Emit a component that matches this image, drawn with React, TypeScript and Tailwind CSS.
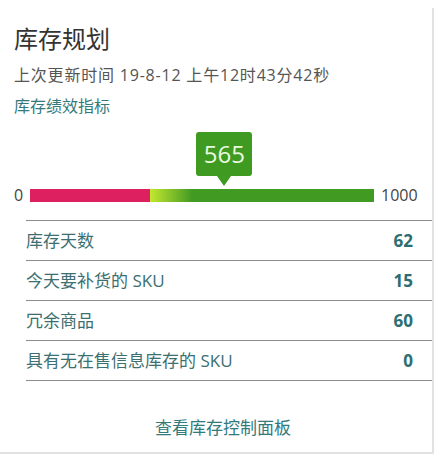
import React from "react";

const FONT = { fontFamily: '"Open Sans", "Noto Sans CJK SC", sans-serif' };

const ROWS: { label: string; value: number }[] = [
  { label: "库存天数", value: 62 },
  { label: "今天要补货的 SKU", value: 15 },
  { label: "冗余商品", value: 60 },
  { label: "具有无在售信息库存的 SKU", value: 0 },
];

function Gauge({ value, max }: { value: number; max: number }) {
  const pct = (value / max) * 100;
  return (
    <div className="flex items-center mt-[72px]">
      <span className="w-[16px] text-[16px] leading-[14px] text-[#444]">0</span>
      <div className="relative w-[344px] h-[13px] flex">
        <div className="w-[120px] h-full bg-[#dc2060]" />
        <div className="w-[42px] h-full bg-gradient-to-r from-[#c2e82e] to-[#419b23]" />
        <div className="flex-1 h-full bg-[#419b23]" />
        {/* value marker */}
        <div
          className="absolute bottom-[16px] -translate-x-1/2 flex flex-col items-center"
          style={{ left: `${pct}%` }}
        >
          <div className="w-[56px] h-[44px] rounded-[3px] bg-[#3f9a21] flex items-center justify-center text-[24px] text-[#eafbe0]">
            {value}
          </div>
          <div className="w-0 h-0 border-l-[7px] border-r-[7px] border-t-[10px] border-l-transparent border-r-transparent border-t-[#3f9a21]" />
        </div>
      </div>
      <span className="ml-[7px] text-[16px] leading-[14px] text-[#444]">{max}</span>
    </div>
  );
}

export default function App() {
  return (
    <div className="w-[440px] h-[457px] bg-white overflow-hidden" style={FONT}>
      <div className="mt-[8px] w-[434px] h-[446px] border-r-2 border-b-2 border-[#e2e2e2] pl-[14px] pt-[16px]">
        <h1 className="text-[24px] leading-[30px] text-[#333]">库存规划</h1>
        <div className="mt-[11px] text-[16px] leading-[20px] tracking-[0.8px] text-[#555]">
          上次更新时间 19-8-12 上午12时43分42秒
        </div>
        <div className="mt-[11px] text-[16px] leading-[20px] text-[#35797b]">库存绩效指标</div>

        <Gauge value={565} max={1000} />

        <div className="mt-[18px] ml-[12px] border-t border-[#8c8c8c]">
          {ROWS.map((r) => (
            <div
              key={r.label}
              className="h-[40px] flex items-center justify-between border-b border-[#8c8c8c] pr-[19px]"
            >
              <span className="text-[17px] text-[#3b6f71]">{r.label}</span>
              <span className="text-[17px] font-bold text-[#2c6e72]">{r.value}</span>
            </div>
          ))}
        </div>

        <div className="mt-[35px] text-center text-[17px] leading-[24px] text-[#327a7c]">
          查看库存控制面板
        </div>
      </div>
    </div>
  );
}
